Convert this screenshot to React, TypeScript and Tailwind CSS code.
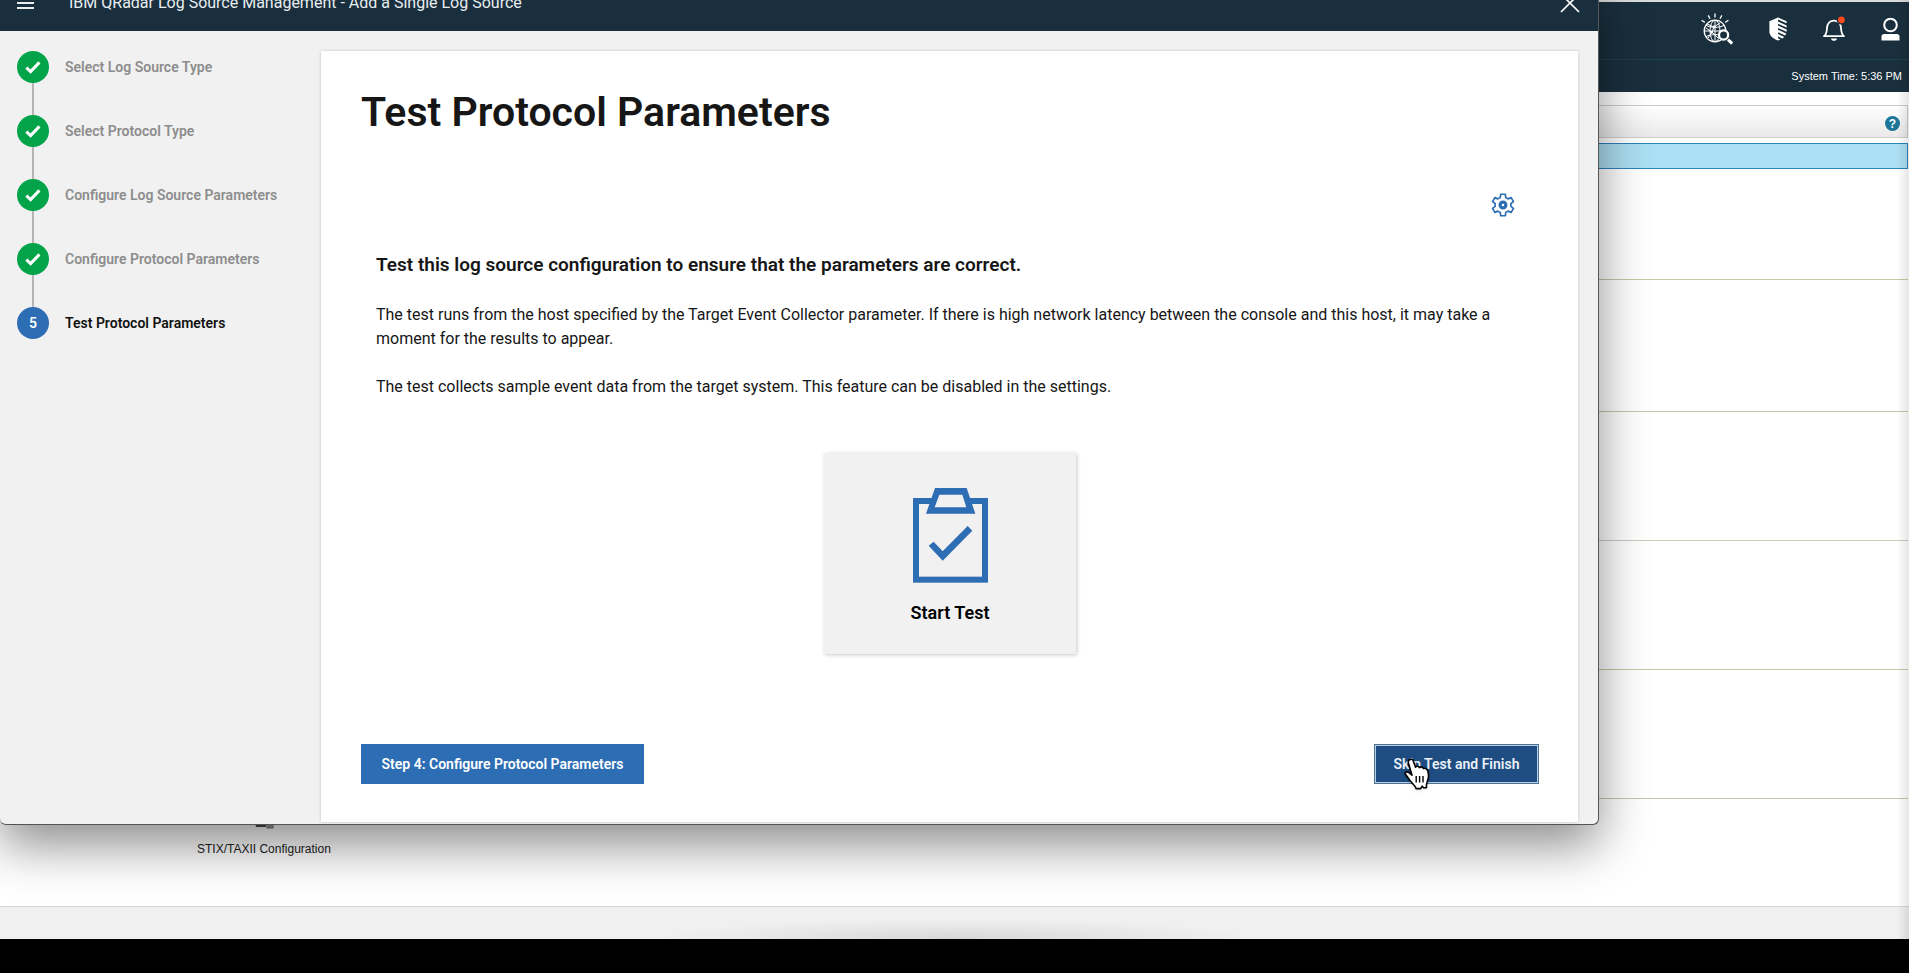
import React from "react";

const COMPLETED_STEPS = [
  "Select Log Source Type",
  "Select Protocol Type",
  "Configure Log Source Parameters",
  "Configure Protocol Parameters",
];

function gearPath(teeth: number, outer: number, inner: number) {
  const points: string[] = [];
  for (let i = 0; i < teeth; i++) {
    const mid = -90 + (360 / teeth) * i;
    const corners: [number, number][] = [
      [mid - 20, inner],
      [mid - 12, outer],
      [mid + 12, outer],
      [mid + 20, inner],
    ];
    for (const [deg, r] of corners) {
      const a = (deg * Math.PI) / 180;
      points.push(`${(12 + r * Math.cos(a)).toFixed(2)} ${(12 + r * Math.sin(a)).toFixed(2)}`);
    }
  }
  return `M${points.join("L")}Z`;
}

function GearIcon() {
  return (
    <svg viewBox="0 0 24 24" className="size-6" fill="none" stroke="#2d6db3" aria-hidden="true">
      <path d={gearPath(6, 11, 8)} strokeWidth="1.7" strokeLinejoin="round" />
      <circle cx="12" cy="12" r="2.9" strokeWidth="3.2" />
    </svg>
  );
}

function MenuIcon() {
  return (
    <svg viewBox="0 0 17 14" className="h-[14px] w-[17px]" stroke="#e8eef1" strokeWidth="1.8" aria-hidden="true">
      <path d="M0 2h17M0 7h17M0 12h17" />
    </svg>
  );
}

function CloseIcon() {
  return (
    <svg viewBox="0 0 20 20" className="size-5" stroke="#ffffff" strokeWidth="1.7" aria-hidden="true">
      <path d="M1 1l18 18M19 1L1 19" />
    </svg>
  );
}

function CheckIcon() {
  return (
    <svg viewBox="0 0 16 13" className="h-[13px] w-4" fill="none" stroke="#ffffff" strokeWidth="3" aria-hidden="true">
      <path d="M1.4 6.6L5.6 10.6L14.4 1.4" />
    </svg>
  );
}

function ClipboardIcon() {
  return (
    <svg viewBox="0 0 225 285" className="h-[95px] w-[75px]" aria-hidden="true">
      <rect x="9" y="39" width="207" height="236" fill="none" stroke="#2d6db3" strokeWidth="18" />
      <path d="M66 0H161L187 77H39Z" fill="#2d6db3" />
      <path d="M79 20H148L160 58H65Z" fill="#f1f1f1" />
      <path d="M47 173L62 161L89 190L164 114L178 128L89 218Z" fill="#2d6db3" />
    </svg>
  );
}

function ThreatGlobeIcon() {
  return (
    <svg viewBox="0 0 32 32" className="size-8" fill="none" stroke="#ffffff" aria-hidden="true">
      <path strokeWidth="1.3" d="M14 .5v4M7.2 2.4l1.8 3.4M20.8 2.4L19 5.8M.6 7.2l3.2 2.200M27.4 7.2l-3.2 2.2" />
      <circle cx="14" cy="18" r="10.8" strokeWidth="1.3" />
      <ellipse cx="14" cy="18" rx="5" ry="10.8" strokeWidth="1" />
      <path strokeWidth="1" d="M14 7.2v21.6M3.2 18h21.6M5 12.4c5 2.6 13 2.6 18 0M5 23.6c5-2.6 13-2.6 18 0" />
      <path strokeWidth="1" d="M6 11l7 3 6-4M7 25l4-6-6-4M13 14l-2 5 6 6" />
      <circle cx="13" cy="14" r="1.4" fill="#ffffff" stroke="none" />
      <circle cx="10.6" cy="19.4" r="1.4" fill="#ffffff" stroke="none" />
      <circle cx="22.6" cy="22" r="4.6" fill="#1a2f3d" strokeWidth="2.2" />
      <path strokeWidth="3" d="M27 26.6l4.2 4" />
    </svg>
  );
}

function ShieldIcon() {
  return (
    <svg viewBox="0 0 18 24" className="h-6 w-[18px]" fill="#ffffff" aria-hidden="true">
      <path d="M9 .4V23.6C3.4 21.4.4 18.6.4 14.5V4.2Z" />
      <path d="M9 .4L17.6 4.2V6.2L9 2.6Z" />
      <path d="M9 4.4L17.6 8.4V10.6L9 6.8Z" />
      <path d="M9 8.6L17.6 12.6V14.8L9 11Z" />
      <path d="M9 12.8L17.2 16.6L16.3 18.6L9 15.2Z" />
      <path d="M9 17L15.2 19.9L13.4 21.5L9 19.4Z" />
      <path d="M9 21.2L11.3 22.5L9 23.6Z" />
    </svg>
  );
}

function BellIcon() {
  return (
    <svg viewBox="0 0 22 26" className="h-[26px] w-[22px] overflow-visible" fill="none" stroke="#ffffff" aria-hidden="true">
      <path strokeWidth="1.8" strokeLinejoin="round" d="M1 20.2c2.4-1.8 2.8-4 3-8.2C4.2 7.4 7 4.6 11 4.6s6.8 2.8 7 7.4c.2 4.2.6 6.4 3 8.2Z" />
      <path d="M7.8 22.4h6.4c-.6 1.6-1.8 2.4-3.2 2.4s-2.6-.8-3.2-2.4Z" fill="#ffffff" stroke="none" />
      <circle cx="18.4" cy="3.8" r="4.800" fill="#1a2f3d" stroke="none" />
      <circle cx="18.4" cy="3.8" r="3.4" fill="#fb4a1e" stroke="none" />
    </svg>
  );
}

function UserIcon() {
  return (
    <svg viewBox="0 0 19 24" className="h-6 w-[19px]" aria-hidden="true">
      <circle cx="9.5" cy="8" r="6.3" fill="none" stroke="#ffffff" strokeWidth="2" />
      <path d="M.5 23.5V19.5C.5 18 1.5 17 3 17H16C17.5 17 18.5 18 18.5 19.5V23.5Z" fill="#ffffff" />
    </svg>
  );
}

function FeedIcon() {
  return (
    <svg viewBox="0 0 24 30" className="h-[30px] w-6" aria-hidden="true">
      <rect x="3" y="4" width="12" height="16" fill="#8a8a8a" />
      <path d="M3 24h11v4H4Z" fill="#4b4b4b" />
      <rect x="15" y="22" width="6" height="7" fill="#9a9a9a" stroke="#7c7c7c" />
    </svg>
  );
}

function HandPointer() {
  return (
    <svg
      viewBox="0 0 26 32"
      className="pointer-events-none absolute top-[14px] left-[30px] h-8 w-[26px] drop-shadow"
      aria-hidden="true"
    >
      <path
        d="M6.5 1.4C8 1 9 1.8 9.4 3.2L11.6 9.2C12.4 7.9 14.6 8 15.4 9.6C16.6 8.4 18.8 8.8 19.4 10.6C21.4 9.8 23.2 10.8 23.8 13C24.9 17 25 19.4 23.6 22.6C22.8 24.6 22.2 26 22.4 29.8H19.6L18.2 28.2L16.6 30.6H12.2C11 27.6 8.8 26 6.8 23.6C4.8 21 3.6 18.8 1.6 16.6C.6 14.8 2.2 13.2 4.4 14.2L8 17.2L4.4 5C3.8 3.2 4.9 1.8 6.5 1.4Z"
        fill="#ffffff"
        stroke="#000000"
        strokeWidth="1.6"
        strokeLinejoin="round"
      />
      <path d="M12.2 18v6.5M15.6 18v6.5M19 18v6.5" stroke="#000000" strokeWidth="1.4" />
    </svg>
  );
}

function AdminConsole() {
  return (
    <div className="relative flex flex-1 flex-col bg-white font-['Liberation_Sans',Arial,sans-serif]">
      <header className="border-t-2 border-[#d9dbdc] bg-[#1a2f3d] text-white">
        <nav className="flex h-[58px] items-center justify-end gap-9 border-b border-[#1d4148] pr-[9px] pb-[3px]">
          <button type="button" aria-label="Threat search"><ThreatGlobeIcon /></button>
          <button type="button" aria-label="Security"><ShieldIcon /></button>
          <button type="button" aria-label="Notifications"><BellIcon /></button>
          <button type="button" aria-label="User"><UserIcon /></button>
        </nav>
        <p className="flex h-8 items-center justify-end pr-[7px] text-[11px]">System Time: 5:36 PM</p>
      </header>
      <main className="flex flex-1 flex-col pr-px">
        <div className="mt-[13px] flex h-[33px] items-center justify-end border border-[#cccccc] bg-linear-to-b from-white to-[#e9e9e9] pr-[7px]">
          <button
            type="button"
            aria-label="Help"
            className="mt-1 flex size-[15px] items-center justify-center rounded-full bg-[#1d7698] text-[12px] leading-none font-bold text-white"
          >
            ?
          </button>
        </div>
        <div className="mt-[5px] h-[26px] border border-[#2b82bd] bg-[#acdff3]" />
        <section className="h-[111px] border-b border-[#c3c9a6]" />
        <section className="h-[132px] border-b border-[#c3c9a6]" />
        <section className="h-[129px] border-b border-[#c9cbbd]" />
        <section className="h-[129px] border-b border-[#c3c9a6]" />
        <section className="h-[129px] border-b border-[#c3c9a6]" />
        <section className="flex pl-[197px]">
          <a href="#stix" className="flex flex-col items-center text-[12px] leading-4 text-[#222222]">
            <FeedIcon />
            <span className="mt-3">STIX/TAXII Configuration</span>
          </a>
        </section>
      </main>
      <footer className="h-[33px] border-t border-[#d6d6d6] bg-[#f0f0f0]">
        <div className="mx-auto mt-3 h-5 w-[600px] bg-radial-[ellipse_50%_100%_at_50%_100%] from-black/10 to-transparent" />
      </footer>
      <div className="pointer-events-none absolute inset-y-0 right-0 w-3 bg-linear-to-r from-transparent to-black/10" />
    </div>
  );
}

function WizardSteps() {
  return (
    <ol className="w-[321px] shrink-0 pt-5 pl-[17px] text-[14px] leading-5 font-semibold">
      {COMPLETED_STEPS.map((step) => (
        <li key={step} className="text-[#8d8d8d]">
          <div className="flex h-8 items-center gap-4">
            <span className="flex size-8 items-center justify-center rounded-full bg-[#03a349]">
              <CheckIcon />
            </span>
            {step}
          </div>
          <div className="ml-[15px] h-8 w-[2px] bg-[#b4b4b4]" />
        </li>
      ))}
      <li className="flex h-8 items-center gap-4 text-[#111111]" aria-current="step">
        <span className="flex size-8 items-center justify-center rounded-full bg-[#2d6db3] text-white">5</span>
        Test Protocol Parameters
      </li>
    </ol>
  );
}

function LogSourceDialog() {
  return (
    <div
      role="dialog"
      aria-label="Add a Single Log Source"
      className="absolute -top-[25px] right-[310px] left-0 overflow-clip rounded-b-md border-r border-b border-[#555555] bg-[#f1f1f1] font-[Roboto,sans-serif] text-[#161616] shadow-[0_20px_50px_rgba(0,0,0,0.45)]"
    >
      <header className="flex h-14 items-center bg-[#1a2f3d] pr-[18px] pl-[17px] text-[#e8eef1]">
        <button type="button" aria-label="Menu"><MenuIcon /></button>
        <h1 className="ml-[35px] text-[16px] leading-6">IBM QRadar Log Source Management - Add a Single Log Source</h1>
        <button type="button" aria-label="Close" className="ml-auto"><CloseIcon /></button>
      </header>
      <div className="flex pr-5 pb-[2px]">
        <WizardSteps />
        <main className="mt-5 flex flex-1 flex-col bg-white pt-[37px] pr-[39px] pb-[38px] pl-10 shadow-[0_0_3px_rgba(0,0,0,0.2)]">
          <h2 className="text-[41px] leading-[48px] font-semibold">Test Protocol Parameters</h2>
          <button type="button" aria-label="Test settings" className="mt-[57px] mr-6 self-end">
            <GearIcon />
          </button>
          <div className="mt-[34px] px-[15px] text-[16px] leading-6">
            <h3 className="text-[19px] leading-7 font-semibold">
              Test this log source configuration to ensure that the parameters are correct.
            </h3>
            <p className="mt-6">
              The test runs from the host specified by the Target Event Collector parameter. If there is high network
              latency between the console and this host, it may take a moment for the results to appear.
            </p>
            <p className="mt-6">
              The test collects sample event data from the target system. This feature can be disabled in the settings.
            </p>
          </div>
          <button
            type="button"
            className="mt-[54px] flex h-[201px] w-[252px] flex-col items-center self-center bg-[#f1f1f1] pt-[35px] text-black shadow-[1px_1px_4px_rgba(0,0,0,0.22)]"
          >
            <ClipboardIcon />
            <span className="mt-[18px] text-[18px] leading-6 font-semibold">Start Test</span>
          </button>
          <div className="mt-[90px] flex justify-between text-[14px] leading-5 font-semibold text-white">
            <button type="button" className="h-10 w-[283px] bg-[#2d6db3]">
              Step 4: Configure Protocol Parameters
            </button>
            <div className="relative">
              <button
                type="button"
                className="h-10 w-[165px] border border-[#52718f] bg-[#1f4d82] text-[#eaf1f8] inset-ring inset-ring-[#b4d0ea]"
              >
                Skip Test and Finish
              </button>
              <HandPointer />
            </div>
          </div>
        </main>
      </div>
    </div>
  );
}

export default function App() {
  return (
    <div className="relative flex min-h-screen flex-col overflow-hidden bg-black pb-[34px]">
      <AdminConsole />
      <LogSourceDialog />
    </div>
  );
}
